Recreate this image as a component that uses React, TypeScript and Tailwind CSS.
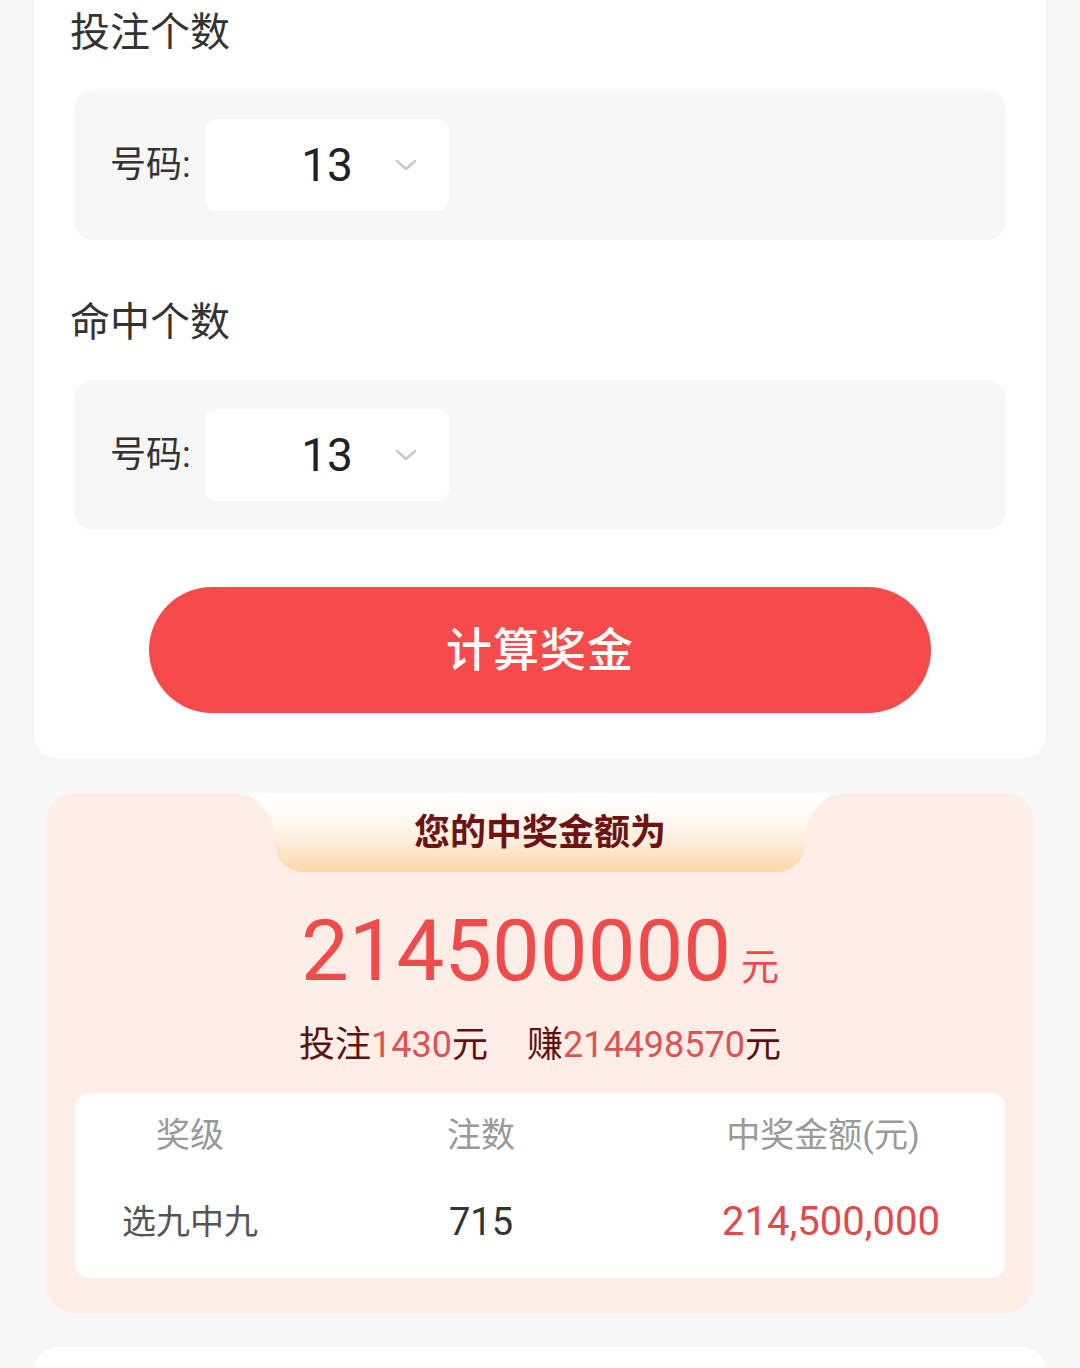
import { useState } from 'react';

const tabGradient =
  'bg-[linear-gradient(180deg,#ffffff_0%,#fffaf5_30%,#feeedd_60%,#fcd6a6_100%)]';

function Chevron() {
  return (
    <svg width="22" height="14" viewBox="0 0 22 14" fill="none">
      <polyline points="2,3 11,11 20,3" stroke="#c9c9c9" strokeWidth="2.4" strokeLinecap="round" strokeLinejoin="round" />
    </svg>
  );
}

function NumberPicker({ value }: { value: number }) {
  return (
    <div className="h-[150px] rounded-[20px] bg-[#f7f7f7] flex items-center pl-[36px]">
      <span className="w-[95px] text-[36px] leading-none text-[#333333]">号码:</span>
      <div className="relative w-[244px] h-[92px] rounded-[12px] bg-white flex items-center justify-center">
        <span className="text-[46px] leading-none text-[#222222]">{value}</span>
        <span className="absolute right-[32px] top-1/2 -translate-y-1/2 flex">
          <Chevron />
        </span>
      </div>
    </div>
  );
}

export default function App() {
  const [betCount] = useState(13);
  const [hitCount] = useState(13);

  const rows = [{ level: '选九中九', count: 715, amount: '214,500,000' }];

  return (
    <div className="min-h-screen bg-[#f7f7f7] px-[34px] font-['Roboto','Noto_Sans_CJK_SC',sans-serif]">
      {/* Input card */}
      <div className="bg-white rounded-b-[24px] px-[40px] pt-[13px] pb-[45px]">
        <h2 className="-ml-[4px] text-[40px] leading-[40px] text-[#333333]">投注个数</h2>
        <div className="mt-[37px]">
          <NumberPicker value={betCount} />
        </div>

        <h2 className="mt-[63px] -ml-[4px] text-[40px] leading-[40px] text-[#333333]">命中个数</h2>
        <div className="mt-[37px]">
          <NumberPicker value={hitCount} />
        </div>

        <button className="mt-[57px] mx-auto flex items-center justify-center w-[782px] h-[126px] rounded-full bg-[#f64b4b] text-white text-[46px] font-medium tracking-[1px]">
          计算奖金
        </button>
      </div>

      {/* Result panel */}
      <div className="mt-[35px] mx-[12px] rounded-[28px] overflow-hidden bg-[#ffede7] pb-[35px]">
        <div className="flex h-[79px]">
          <div className={`flex-1 ${tabGradient}`}>
            <div className="h-full bg-[#ffede7] rounded-tr-[40px_50px]" />
          </div>
          <div className={`w-[530px] rounded-b-[28px] ${tabGradient} flex items-center justify-center`}>
            <span className="text-[36px] leading-none font-bold text-[#6e1212]">您的中奖金额为</span>
          </div>
          <div className={`flex-1 ${tabGradient}`}>
            <div className="h-full bg-[#ffede7] rounded-tl-[40px_50px]" />
          </div>
        </div>

        <div className="mt-[37px] flex items-baseline justify-center text-[#f04b4b]">
          <span className="text-[85px] leading-[84px]">214500000</span>
          <span className="ml-[10px] text-[38px] leading-none">元</span>
        </div>

        <div className="mt-[32px] flex justify-center gap-[39px] text-[36px] leading-[40px] text-[#5c1010]">
          <span>
            投注<span className="text-[#e05252]">1430</span>元
          </span>
          <span>
            赚<span className="text-[#e05252]">214498570</span>元
          </span>
        </div>

        <div className="mt-[28px] mx-[29px] rounded-[14px] bg-white pt-[20px] pb-[34px] pr-[16px]">
          <div className="grid grid-cols-[230px_352px_1fr] h-[44px] items-center text-center text-[34px] leading-none text-[#999999]">
            <span>奖级</span>
            <span>注数</span>
            <span>中奖金额(元)</span>
          </div>
          {rows.map(row => (
            <div
              key={row.level}
              className="mt-[43px] grid grid-cols-[230px_352px_1fr] h-[44px] items-center text-center leading-none"
            >
              <span className="text-[34px] text-[#555555]">{row.level}</span>
              <span className="text-[38px] text-[#333333]">{row.count}</span>
              <span className="pl-[16px] text-[40px] text-[#e04a4a]">{row.amount}</span>
            </div>
          ))}
        </div>
      </div>

      {/* Next card */}
      <div className="mt-[34px] h-[40px] bg-white rounded-t-[24px]" />
    </div>
  );
}
